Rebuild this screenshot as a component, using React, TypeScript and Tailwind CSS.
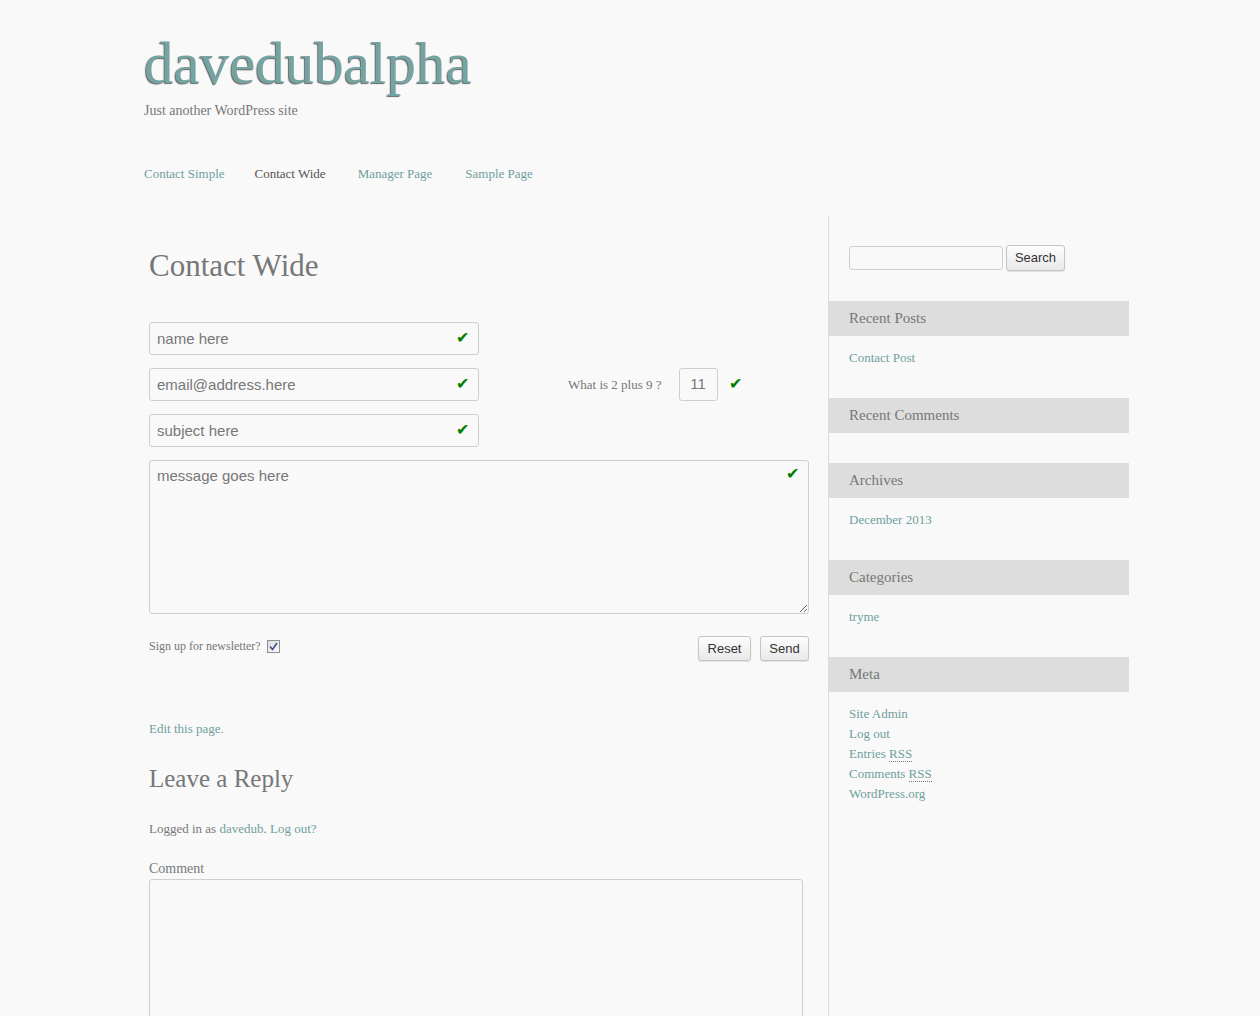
import React from "react";

const serif = "font-['Liberation_Serif',_'Times_New_Roman',_serif]";
const sans = "font-['Liberation_Sans',_Arial,_sans-serif]";

function Check({ className = "" }: { className?: string }) {
  return (
    <span className={`absolute text-[16px] leading-none text-[#008000] ${sans} ${className}`}>✔</span>
  );
}

function Field({ placeholder }: { placeholder: string }) {
  return (
    <div className="relative w-[330px] h-[33px]">
      <input
        placeholder={placeholder}
        className={`w-full h-full border border-[#cfcfcf] rounded-[3px] bg-[#f9f9f9] pl-[7px] text-[15px] text-[#777] placeholder:text-[#777] outline-none ${sans}`}
      />
      <Check className="right-[10px] top-[8px]" />
    </div>
  );
}

function WidgetHeader({ title }: { title: string }) {
  return (
    <div className={`h-[35px] bg-[#dddddd] pl-[20px] flex items-center text-[15px] text-[#777] ${serif}`}>
      {title}
    </div>
  );
}

export default function App() {
  return (
    <div className={`min-h-[1016px] bg-[#f9f9f9] ${serif}`}>
      <div className="ml-[144px] w-[985px]">
        <header className="pt-[33px]">
          <div
            className={`text-[59px] leading-[60px] text-[#74a3a2] [text-shadow:-1px_1px_1px_#666] ${serif}`}
          >
            davedubalpha
          </div>
          <div className="mt-[8px] text-[14px] leading-[20px] text-[#777]">Just another WordPress site</div>
          <nav className="mt-[43px] flex gap-[30px] text-[13px] leading-[20px]">
            <a className="text-[#6f9f9e]">Contact Simple</a>
            <a className="text-[#555]">Contact Wide</a>
            <a className="text-[#6f9f9e] ml-[2px]">Manager Page</a>
            <a className="text-[#6f9f9e] ml-[3px]">Sample Page</a>
          </nav>
        </header>

        <div className="mt-[32px] flex">
          <main className="w-[684px] pl-[5px] pr-[19px] pt-[31px] pb-[40px]">
            <h1 className="text-[31px] leading-[37px] text-[#777]">Contact Wide</h1>

            <div className="mt-[38px] flex flex-col gap-[13px]">
              <Field placeholder="name here" />
              <div className="flex items-center">
                <Field placeholder="email@address.here" />
                <span className="ml-[89px] text-[13px] text-[#777]">What is 2 plus 9 ?</span>
                <div className="ml-[17px] w-[39px] h-[33px] border border-[#cfcfcf] rounded-[3px] flex items-center justify-center">
                  <span className={`text-[15px] text-[#777] ${sans}`}>11</span>
                </div>
                <span className={`ml-[11px] -mt-[2px] text-[16px] leading-none text-[#008000] ${sans}`}>✔</span>
              </div>
              <Field placeholder="subject here" />
              <div className="relative">
                <textarea
                  placeholder="message goes here"
                  className={`block w-[660px] h-[154px] border border-[#cfcfcf] rounded-[3px] bg-[#f9f9f9] px-[7px] py-[4px] text-[15px] text-[#777] placeholder:text-[#777] outline-none ${sans}`}
                />
                <Check className="right-[10px] top-[6px]" />
              </div>
            </div>

            <div className="mt-[22px] flex justify-between items-start">
              <div className="flex items-center mt-[3px]">
                <span className="text-[12px] leading-[14px] text-[#777]">Sign up for newsletter?</span>
                <span className="ml-[6px] w-[13px] h-[13px] border border-[#8e8f8f] bg-gradient-to-br from-[#dcdcdc] to-[#fbfbfb] flex items-center justify-center">
                  <svg width="9" height="9" viewBox="0 0 9 9">
                    <path d="M1 4.5 L3.5 7.5 L8 1" fill="none" stroke="#3c4f8c" strokeWidth="1.6" />
                  </svg>
                </span>
              </div>
              <div className="flex gap-[9px]">
                <button className={`w-[53px] h-[25px] rounded-[3px] border border-[#c4c4c4] bg-gradient-to-b from-[#fdfdfd] to-[#e9e9e9] shadow-[0_1px_1px_rgba(0,0,0,0.1)] text-[13px] text-[#333] ${sans}`}>
                  Reset
                </button>
                <button className={`w-[49px] h-[25px] rounded-[3px] border border-[#c4c4c4] bg-gradient-to-b from-[#fdfdfd] to-[#e9e9e9] shadow-[0_1px_1px_rgba(0,0,0,0.1)] text-[13px] text-[#333] ${sans}`}>
                  Send
                </button>
              </div>
            </div>

            <div className="mt-[58px] text-[13px] leading-[20px] text-[#6f9f9e]">Edit this page.</div>

            <h2 className="mt-[25px] text-[25px] leading-[30px] text-[#777]">Leave a Reply</h2>

            <div className="mt-[25px] text-[13px] leading-[20px] text-[#777]">
              Logged in as <a className="text-[#6f9f9e]">davedub</a>. <a className="text-[#6f9f9e]">Log out?</a>
            </div>

            <div className="mt-[20px] text-[14px] leading-[20px] text-[#777]">Comment</div>
            <textarea className="block w-[654px] h-[220px] border border-[#cfcfcf] rounded-[3px] bg-[#f9f9f9] outline-none" />
          </main>

          <aside className="w-[301px] border-l border-[#dddddd]">
            <div className="pt-[29px] pl-[20px] flex items-center gap-[3px]">
              <input className="w-[154px] h-[24px] border border-[#cfcfcf] rounded-[3px] bg-[#f9f9f9] outline-none" />
              <button className={`w-[59px] h-[26px] rounded-[3px] border border-[#c4c4c4] bg-gradient-to-b from-[#fdfdfd] to-[#e9e9e9] shadow-[0_1px_1px_rgba(0,0,0,0.1)] text-[13px] text-[#333] ${sans}`}>
                Search
              </button>
            </div>

            <div className="mt-[30px]">
              <WidgetHeader title="Recent Posts" />
              <ul className="mt-[12px] pl-[20px] text-[13px] leading-[20px] text-[#6f9f9e]">
                <li>Contact Post</li>
              </ul>
            </div>

            <div className="mt-[30px]">
              <WidgetHeader title="Recent Comments" />
            </div>

            <div className="mt-[30px]">
              <WidgetHeader title="Archives" />
              <ul className="mt-[12px] pl-[20px] text-[13px] leading-[20px] text-[#6f9f9e]">
                <li>December 2013</li>
              </ul>
            </div>

            <div className="mt-[30px]">
              <WidgetHeader title="Categories" />
              <ul className="mt-[12px] pl-[20px] text-[13px] leading-[20px] text-[#6f9f9e]">
                <li>tryme</li>
              </ul>
            </div>

            <div className="mt-[30px]">
              <WidgetHeader title="Meta" />
              <ul className="mt-[12px] pl-[20px] text-[13px] leading-[20px] text-[#6f9f9e]">
                <li>Site Admin</li>
                <li>Log out</li>
                <li>
                  Entries <abbr className="no-underline border-b border-dotted border-[#777]">RSS</abbr>
                </li>
                <li>
                  Comments <abbr className="no-underline border-b border-dotted border-[#777]">RSS</abbr>
                </li>
                <li>WordPress.org</li>
              </ul>
            </div>
          </aside>
        </div>
      </div>
    </div>
  );
}
